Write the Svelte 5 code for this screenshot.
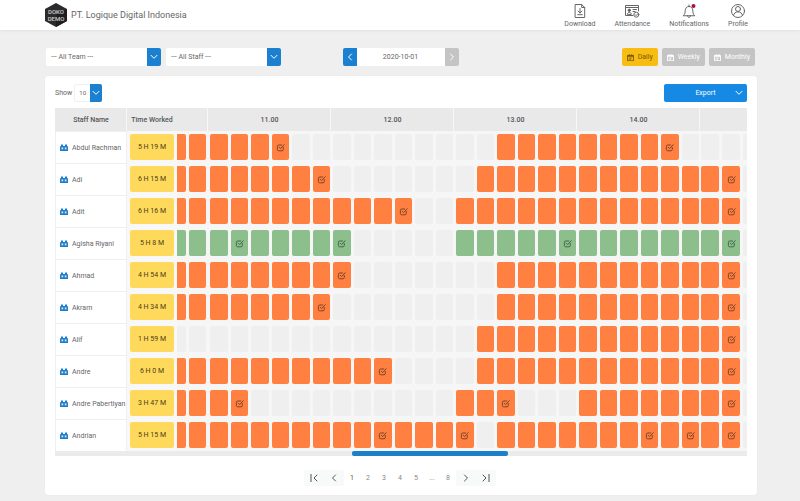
<script>
  const rows = [
    { name: 'Abdul Rachman', time: '5 H 19 M', spans: [[0, 5], [16, 24]], marks: [5, 24] },
    { name: 'Adi', time: '6 H 15 M', spans: [[0, 7], [15, 27]], marks: [7, 27] },
    { name: 'Adit', time: '6 H 16 M', spans: [[0, 11], [14, 27]], marks: [11, 27] },
    { name: 'Agisha Riyani', time: '5 H 8 M', spans: [[0, 8], [14, 27]], marks: [3, 8, 19, 27], green: true },
    { name: 'Ahmad', time: '4 H 54 M', spans: [[0, 8], [16, 27]], marks: [8, 27] },
    { name: 'Akram', time: '4 H 34 M', spans: [[0, 7], [16, 27]], marks: [7, 27] },
    { name: 'Alif', time: '1 H 59 M', spans: [[15, 27]], marks: [27] },
    { name: 'Andre', time: '6 H 0 M', spans: [[0, 10], [15, 27]], marks: [10, 27] },
    { name: 'Andre Pabertiyan', time: '3 H 47 M', spans: [[0, 3], [14, 16], [20, 27]], marks: [3, 16, 27] },
    { name: 'Andrian', time: '5 H 15 M', spans: [[0, 14], [16, 27]], marks: [10, 14, 23, 25, 27] }
  ];

  // Ten-minute slots grouped by the hour they belong to
  const hours = [
    { label: '', slots: [0, 1], kind: 'first' },
    { label: '11.00', slots: [2, 3, 4, 5, 6, 7], kind: 'full' },
    { label: '12.00', slots: [8, 9, 10, 11, 12, 13], kind: 'full' },
    { label: '13.00', slots: [14, 15, 16, 17, 18, 19], kind: 'full' },
    { label: '14.00', slots: [20, 21, 22, 23, 24, 25], kind: 'full' },
    { label: '', slots: [26, 27, 28], kind: 'last' }
  ];

  const filled = (row, i) => row.spans.some(([a, b]) => i >= a && i <= b);
  let period = $state('Daily');
  const periods = ['Daily', 'Weekly', 'Monthly'];
</script>

{#snippet down()}
  <svg class="down" viewBox="0 0 8 6" aria-hidden="true"><path d="M1 1.3 4 4.3 7 1.3" /></svg>
{/snippet}

<header>
  <div class="brand">
    <svg class="logo" viewBox="0 0 22 24" role="img" aria-label="Doko Demo">
      <polygon points="11,0 22,6 22,18 11,24 0,18 0,6" fill="#2b2b2d" />
      <polygon points="11,12 22,6 22,18 11,24" fill="#1e1e20" />
      <text x="11" y="11" text-anchor="middle">DOKO</text>
      <text x="11" y="18" text-anchor="middle">DEMO</text>
    </svg>
    <span>PT. Logique Digital Indonesia</span>
  </div>
  <nav>
    <a href="#download">
      <svg viewBox="0 0 16 16"><path d="M3.500 1.500h6.200l3 3v10H3.500zM9.700 1.500v3h3M8 5.500V10M6 8l2 2 2-2M5.700 11.700h4.600" /></svg>
      Download
    </a>
    <a href="#attendance">
      <svg viewBox="0 0 16 16"><path d="M9 12.500H1.500v-10h13V8M1.500 4.500h13M9 6.500h3.500M9 8.500h2M3.300 11c0-2.300 4-2.300 4 0z" /><circle cx="5.300" cy="7.300" r="1.200" fill="#555" /><circle cx="12.300" cy="11.700" r="2.500" /><path d="m11.200 11.700.9.9 1.500-1.700" /></svg>
      Attendance
    </a>
    <a href="#notifications">
      <svg viewBox="0 0 16 16"><path d="M2.500 12.500c1.700-1.500 1.500-3 1.700-5C4.400 5 5.800 3.500 8 3.500S11.600 5 11.800 7.500c.2 2 0 3.500 1.700 5zM6.500 12.700c.2 2.400 2.800 2.400 3 0M8 3.500V2" /><circle class="dot" cx="12.500" cy="3" r="2" /></svg>
      Notifications
    </a>
    <a href="#profile">
      <svg viewBox="0 0 16 16"><circle cx="8" cy="8" r="6.500" /><circle cx="8" cy="6" r="2.500" /><path d="M3.500 12.500c.4-5 8.600-5 9 0" /></svg>
      Profile
    </a>
  </nav>
</header>

<main>
  <div class="filters">
    <div class="left">
      <div class="pick">
        <select aria-label="Team"><option>--- All Team ---</option></select>
        <i>{@render down()}</i>
      </div>
      <div class="pick">
        <select aria-label="Staff"><option>--- All Staff ---</option></select>
        <i>{@render down()}</i>
      </div>
    </div>
    <div class="date">
      <button aria-label="Previous day"><svg viewBox="0 0 6 8"><path d="M4.500 1 1.500 4l3 3" /></svg></button>
      <input type="text" aria-label="Date" value="2020-10-01" />
      <button class="off" aria-label="Next day"><svg viewBox="0 0 6 8"><path d="m1.500 1 3 3-3 3" /></svg></button>
    </div>
    <div class="periods">
      {#each periods as p}
        <button class:active={period === p} onclick={() => (period = p)}>
          <svg viewBox="0 0 8 8"><path fill="currentColor" fill-rule="evenodd" d="M1 1h1V0h1v1h2V0h1v1h1q1 0 1 1v5q0 1-1 1H1Q0 8 0 7V2q0-1 1-1zM1 3v4h6V3z" /><path fill="currentColor" d="M2 4h1v1H2zm1.500 0h1v1h-1zM5 4h1v1H5zM2 5.500h1v1H2zm1.500 0h1v1h-1z" /></svg>
          {p}
        </button>
      {/each}
    </div>
  </div>

  <section class="card">
    <div class="tools">
      <label>Show
        <span class="pick small">
          <select><option>10</option></select>
          <i>{@render down()}</i>
        </span>
      </label>
      <button class="export"><span>Export</span>{@render down()}</button>
    </div>

    <table>
      <colgroup>
        <col class="c-name" /><col class="c-time" />
        {#each hours as h}<col class="c-{h.kind}" />{/each}
      </colgroup>
      <thead>
        <tr>
          <th>Staff Name</th>
          <th>Time Worked</th>
          {#each hours as h}<th class="h-{h.kind}">{h.label}</th>{/each}
        </tr>
      </thead>
      <tbody>
        {#each rows as row}
          <tr>
            <td class="name">
              <div>
                <svg viewBox="0 0 8 7" aria-hidden="true"><path d="M0 2.500 1 2V.5h2V2h2V.5h2V2l1 .5V7H0z" fill="#2180cc" /><path d="M1.500 3.500h1.700v1.800H1.500zm3.300 0h1.700v1.800H4.800z" fill="#d5e8f7" /></svg>
                {row.name}
              </div>
            </td>
            <td class="time"><span>{row.time}</span></td>
            {#each hours as h}
              <td class="hour">
                <div class="slots {h.kind}">
                  {#each h.slots as i}
                    <span class:on={filled(row, i)} class:green={row.green}>
                      {#if row.marks.includes(i)}
                        <svg viewBox="0 0 9 9" aria-label="Task"><path d="M7.300 4.500V6.500q0 1.300-1.300 1.300H2.700Q1.400 7.800 1.400 6.500V3.300Q1.400 2 2.700 2h3M3.300 4.200l1.400 1.400L8.200 1.700" /></svg>
                      {/if}
                    </span>
                  {/each}
                </div>
              </td>
            {/each}
          </tr>
        {/each}
      </tbody>
    </table>
    <div class="scroll"><div></div></div>

    <nav class="pages" aria-label="Pages">
      <div class="ends">
        <button aria-label="First page"><svg viewBox="0 0 8 8"><path d="M1 0v8M7 1 4 4l3 3" /></svg></button>
        <button aria-label="Previous page"><svg viewBox="0 0 8 8"><path d="M5.500 1l-3 3 3 3" /></svg></button>
      </div>
      {#each ['1', '2', '3', '4', '5', '...', '8'] as n}
        {#if n === '...'}<span>{n}</span>{:else}<a href="#page-{n}" class:current={n === '1'}>{n}</a>{/if}
      {/each}
      <div class="ends">
        <button aria-label="Next page"><svg viewBox="0 0 8 8"><path d="m2.500 1 3 3-3 3" /></svg></button>
        <button aria-label="Last page"><svg viewBox="0 0 8 8"><path d="M7 0v8M1 1l3 3-3 3" /></svg></button>
      </div>
    </nav>
  </section>
</main>

<style>
  :global(body) {
    background: #efeff0;
    color: #666;
    font: 7px/10px Roboto, 'Liberation Sans', sans-serif;
  }
  button, select, input { font: inherit; color: inherit; border: 0; margin: 0; padding: 0; }
  button { cursor: pointer; }
  a { color: inherit; text-decoration: none; }
  svg { display: block; fill: none; stroke-linecap: round; stroke-linejoin: round; }

  header {
    display: flex;
    justify-content: space-between;
    height: 30px;
    padding: 0 43px 0 45px;
    background: #fff;
    box-shadow: 0 1px 3px #0000000f;
  }
  .brand { display: flex; align-items: center; gap: 4px; font-size: 9px; }
  .logo { width: 22px; height: 24px; }
  .logo text { fill: #ccc; font: 500 6px Roboto, sans-serif; }
  header nav { display: flex; gap: 19px; padding: 3px 9px 0 0; }
  header nav a { display: flex; flex-direction: column; align-items: center; }
  header nav a svg { width: 16px; height: 16px; stroke: #666; stroke-width: 1; }
  header nav .dot { fill: #a01640; stroke: none; }

  main { padding: 18px 43px 6px 45px; }
  .filters {
    display: grid;
    grid-template-columns: 1fr 116px 1fr;
    align-items: center;
    padding: 0 2px 0 1px;
    margin-bottom: 10px;
  }
  .left { display: flex; gap: 5px; }
  .pick { display: inline-grid; grid-template-columns: 1fr 14px; width: 115px; height: 18px; }
  .pick select {
    grid-area: 1 / 1 / 2 / 3;
    min-width: 0;
    appearance: none;
    background: #fff;
    border-radius: 2px;
    padding-left: 5px;
  }
  .pick i {
    grid-area: 1 / 2;
    z-index: 1;
    display: grid;
    place-items: center;
    background: #1c80d0;
    border-radius: 0 2px 2px 0;
    pointer-events: none;
  }
  .down { width: 8px; height: 6px; stroke: #fff; stroke-width: 1; }
  .date { display: flex; height: 18px; }
  .date button { width: 14px; display: grid; place-items: center; background: #1c80d0; border-radius: 2px 0 0 2px; }
  .date button.off { background: #c4c4c4; border-radius: 0 2px 2px 0; }
  .date svg { width: 6px; height: 8px; stroke: #fff; stroke-width: 1; }
  .date input { flex: 1; min-width: 0; text-align: center; background: #fff; }
  .periods { display: flex; justify-content: flex-end; gap: 4px; }
  .periods button {
    display: flex;
    align-items: center;
    gap: 4px;
    height: 18px;
    padding: 0 5px;
    border-radius: 2px;
    background: #c4c4c5;
    color: #fff;
  }
  .periods button.active { background: #f7bd12; color: #7d5a05; }
  .periods svg { width: 7px; height: 7px; }

  .card { background: #fff; border-radius: 4px; padding: 8px 10px; box-shadow: 0 0 2px #0000000a; }
  .tools { display: flex; justify-content: space-between; margin-bottom: 6px; }
  .tools label { display: flex; align-items: center; gap: 2px; }
  .pick.small { width: 28px; grid-template-columns: 1fr 12px; }
  .small select { border: 1px solid #f0f0f0; padding-left: 4px; font-size: 6px; }
  .export {
    display: flex;
    align-items: center;
    width: 83px;
    height: 18px;
    padding: 0 4px 0 0;
    border-radius: 2px;
    background: #1589e4;
    color: #fff;
  }
  .export span { flex: 1; padding-left: 12px; }

  table { width: 100%; table-layout: fixed; border-collapse: separate; border-spacing: 0; }
  .c-name { width: 72px; }
  .c-time { width: 50px; }
  .c-first { width: 31px; }
  .c-last { width: 47px; }
  th { height: 23px; padding: 0; background: #e9e9ea; font-weight: 500; color: #555; box-shadow: inset -1px 0 #f7f7f8; }
  th.h-last { box-shadow: none; }
  th:nth-child(2) { box-shadow: none; }
  td { height: 32px; padding: 0; box-sizing: border-box; }
  .name { border: solid #efeff0; border-width: 1px 1px 0; white-space: nowrap; }
  .name div { display: flex; align-items: center; gap: 4px; padding-left: 4px; }
  .name svg { width: 8px; height: 7px; }
  .time { background: #f8f8f9; }
  .time span {
    display: block;
    margin: 0 3px;
    border-radius: 2px;
    background: #ffd95c;
    color: #4a3d18;
    text-align: center;
    line-height: 26px;
  }
  .hour { background: #f6f6f7; }
  .slots { display: grid; height: 26px; overflow: hidden; }
  .full { grid-template-columns: repeat(6, 1fr); gap: 3px; padding: 0 1px 0 2px; }
  .first { grid-template-columns: 9px 17px; gap: 3px; }
  .last { grid-template-columns: 18px 18px 4px; gap: 3px; padding-left: 1px; }
  .slots span { display: grid; place-items: center; border-radius: 2px; background: #efeff0; }
  .first span:first-child { border-radius: 0 2px 2px 0; }
  .last span:last-child { border-radius: 2px 0 0 2px; }
  .slots .on { background: #ff8040; }
  .slots .on.green { background: #8cbf8b; }
  .slots svg { width: 9px; height: 9px; stroke: #7d452a; stroke-width: 1; }
  .slots .green svg { stroke: #44694a; }

  .scroll { height: 5px; background: #ebebec; }
  .scroll div { width: 156px; height: 5px; margin: 0 auto; border-radius: 2px; background: #1c80c8; transform: translateX(29px); }

  .pages { display: flex; justify-content: center; align-items: center; padding: 14px 2px 1px 0; }
  .pages a, .pages > span { width: 16px; text-align: center; color: #888; }
  .pages a.current { color: #555; }
  .ends { display: flex; background: #f8f9f9; border-radius: 2px; }
  .ends button { width: 20px; height: 16px; display: grid; place-items: center; background: none; }
  .ends svg { width: 8px; height: 8px; stroke: #555; stroke-width: 1; }
</style>
